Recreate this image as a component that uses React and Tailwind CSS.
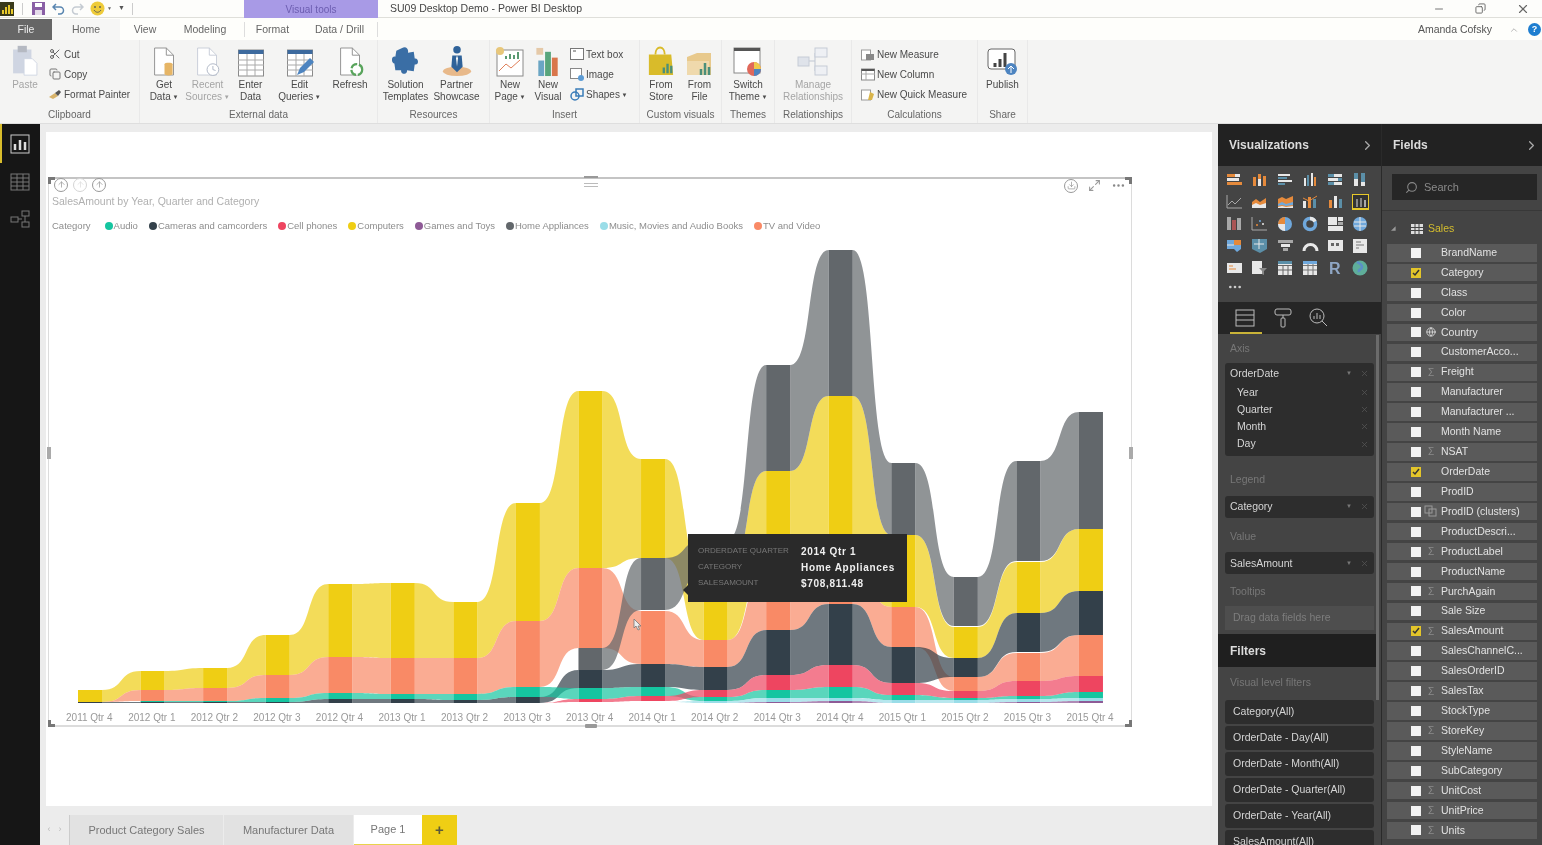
import { Scissors, Copy, ChevronRight, Search, X, ChevronUp, Minus, Globe, MoreHorizontal, Download, Maximize2, ArrowUp } from 'lucide-react';

const Y = '#EFCE14';
const OR = '#F98A66';
const GR = '#62676B';
const DK = '#33404A';
const TE = '#15C5A0';
const RE = '#EE4560';
const LB = '#9ADDE8';
const PU = '#8E5A96';

// top/bottom of every ribbon per quarter, null where the series has no bar
const series = [
  { color: Y, rows: [[690, 702], [671, 690], [668, 688], [635, 675], [584, 657], [583, 658], [602, 658], [503, 621], [391, 568], [459, 558], [572, 640], [471, 565], [396, 565], [535, 607], [627, 658], [562, 613], [529, 591]] },
  { color: OR, rows: [[702, 702], [690, 701], [688, 701], [675, 698], [657, 693], [658, 694], [658, 694], [621, 687], [568, 648], [611, 664], [640, 667], [572, 630], [565, 604], [607, 647], [677, 691], [653, 681], [635, 676]] },
  { color: DK, rows: [[702, 703], [702, 703], [702, 703], [702, 703], [699, 703], [699, 703], [700, 703], [697, 703], [670, 688], [664, 687], [667, 690], [630, 675], [604, 665], [647, 683], [658, 677], [613, 652], [591, 635]] },
  { color: TE, rows: [null, [701, 702], [701, 702], [698, 702], [693, 699], [694, 699], [694, 700], [687, 697], [688, 699], [687, 696], [697, 701], [690, 698], [687, 698], [695, 700], [698, 700], [696, 699], [692, 698]] },
  { color: RE, rows: [null, null, null, null, null, null, null, [703, 703], [699, 702], [696, 701], [690, 697], [675, 690], [665, 687], [683, 695], [691, 698], [681, 696], [676, 692]] },
  { color: LB, rows: [null, null, null, null, null, null, null, null, null, [702, 702], [701, 703], [698, 702], [698, 701], [700, 703], [700, 703], [699, 702], [698, 701]] },
  { color: PU, rows: [null, null, null, null, null, null, null, null, null, null, [703, 703], [702, 703], [701, 703], [703, 703], [703, 703], [702, 703], [701, 703]] },
  { color: GR, rows: [null, null, null, null, null, null, null, null, [648, 670], [558, 610], [540, 572], [365, 471], [250, 396], [463, 535], [577, 626], [461, 561], [412, 529]] },
];

const quarters = ['2011 Qtr 4', '2012 Qtr 1', '2012 Qtr 2', '2012 Qtr 3', '2012 Qtr 4', '2013 Qtr 1', '2013 Qtr 2', '2013 Qtr 3', '2013 Qtr 4', '2014 Qtr 1', '2014 Qtr 2', '2014 Qtr 3', '2014 Qtr 4', '2015 Qtr 1', '2015 Qtr 2', '2015 Qtr 3', '2015 Qtr 4'];

const legend = [
  ['Audio', 'bg-[#15C5A0]'],
  ['Cameras and camcorders', 'bg-[#33404A]'],
  ['Cell phones', 'bg-[#EE4560]'],
  ['Computers', 'bg-[#EFCE14]'],
  ['Games and Toys', 'bg-[#8E5A96]'],
  ['Home Appliances', 'bg-[#62676B]'],
  ['Music, Movies and Audio Books', 'bg-[#9ADDE8]'],
  ['TV and Video', 'bg-[#F98A66]'],
];

const fields = [
  ['BrandName'], ['Category', 'check'], ['Class'], ['Color'], ['Country', 'globe'], ['CustomerAcco...'],
  ['Freight', 'sum'], ['Manufacturer'], ['Manufacturer ...'], ['Month Name'], ['NSAT', 'sum'], ['OrderDate', 'check'],
  ['ProdID'], ['ProdID (clusters)', 'cluster'], ['ProductDescri...'], ['ProductLabel', 'sum'], ['ProductName'],
  ['PurchAgain', 'sum'], ['Sale Size'], ['SalesAmount', 'checksum'], ['SalesChannelC...'], ['SalesOrderID'],
  ['SalesTax', 'sum'], ['StockType'], ['StoreKey', 'sum'], ['StyleName'], ['SubCategory'], ['UnitCost', 'sum'],
  ['UnitPrice', 'sum'], ['Units', 'sum'],
];

const barX = (i) => 89 + i * 62.56;

function ribbon(a, b, i) {
  const x0 = barX(i) + 12;
  const x1 = barX(i + 1) - 12;
  const k = (x1 - x0) * 0.6;
  return `M${x0} ${a[0]}C${x0 + k} ${a[0]} ${x1 - k} ${b[0]} ${x1} ${b[0]}L${x1} ${b[1]}C${x1 - k} ${b[1]} ${x0 + k} ${a[1]} ${x0} ${a[1]}Z`;
}

function RibbonChart() {
  return (
    <svg width="1084" height="466" viewBox="48 240 1084 466" className="block">
      {series.map((s, n) => (
        <g key={n} fill={s.color} opacity="0.7">
          {s.rows.slice(0, -1).map((r, i) => (r && s.rows[i + 1] ? <path key={i} d={ribbon(r, s.rows[i + 1], i)} /> : null))}
        </g>
      ))}
      {series.map((s, n) => (
        <g key={n} fill={s.color}>
          {s.rows.map((r, i) => (r ? <rect key={i} x={barX(i) - 12} y={r[0]} width="24" height={r[1] - r[0]} /> : null))}
        </g>
      ))}
    </svg>
  );
}

function BigButton({ w, l1, l2, caret, dim, children }) {
  return (
    <div className={`flex flex-col items-center shrink-0 ${w}`}>
      <div className="h-[33px] flex items-end justify-center">{children}</div>
      <div className={`mt-[2px] text-[10px] leading-[12px] text-center whitespace-nowrap ${dim ? 'text-[#a5a5a5]' : 'text-[#4a4a4a]'}`}>
        <div>{l1}</div>
        {l2 && <div>{l2}{caret && <span className="text-[6px] align-middle"> ▼</span>}</div>}
      </div>
    </div>
  );
}

function SmallButton({ icon, children }) {
  return (
    <div className="h-[20px] flex items-center gap-[2px] text-[10px] text-[#4a4a4a] whitespace-nowrap">
      <span className="w-[15px] flex justify-center">{icon}</span>
      {children}
    </div>
  );
}

function Group({ w, label, children }) {
  return (
    <div className={`flex flex-col shrink-0 h-full border-r border-[#e9e9e9] ${w}`}>
      <div className="h-[64px] shrink-0 flex pt-[4px]">{children}</div>
      <div className="h-[19px] text-[10px] text-[#666] text-center leading-[22px]">{label}</div>
    </div>
  );
}

function Doc({ dim, children }) {
  const c = dim ? '#c5cbd6' : '#8a8a8a';
  return (
    <svg width="27" height="31" viewBox="0 0 30 34">
      <path d="M4 2h13l8 8v22H4z" fill="#fff" stroke={c} />
      <path d="M17 2v8h8" fill="none" stroke={c} />
      {children}
    </svg>
  );
}

function TableIcon({ w = 26, h = 28 }) {
  return (
    <svg width={w} height={h} viewBox="0 0 26 28">
      <rect x="0.5" y="1" width="25" height="26" fill="#fff" stroke="#8a8a8a" />
      <rect x="0.5" y="1" width="25" height="4" fill="#3d6a9e" />
      <path d="M0 11h26M0 16h26M0 21h26M9 5v22M17 5v22" stroke="#aaa" />
    </svg>
  );
}

function Ribbon() {
  return (
    <div className="h-[83px] bg-[#f4f4f3] flex shrink-0">
      <Group w="w-[140px]" label="Clipboard">
        <div className="w-[46px] flex">
          <BigButton w="w-[50px]" l1="Paste" dim>
            <svg width="28" height="33" viewBox="0 0 30 36">
              <rect x="2" y="6" width="20" height="26" fill="#cfd5e2" />
              <rect x="7" y="2" width="10" height="7" fill="#b5b9c2" />
              <path d="M14 16h9l5 5v13H14z" fill="#fff" stroke="#cfd5e2" />
            </svg>
          </BigButton>
        </div>
        <div className="flex flex-col pl-[1px]">
          <SmallButton icon={<Scissors size={12} color="#666" />}>Cut</SmallButton>
          <SmallButton icon={<Copy size={12} color="#777" />}>Copy</SmallButton>
          <SmallButton icon={
            <svg width="14" height="12" viewBox="0 0 14 12"><path d="M1 9l6-4 3 3-5 3z" fill="#d8b36a" /><path d="M7 5l4-3 2 2-3 4z" fill="#555" /></svg>
          }>Format Painter</SmallButton>
        </div>
      </Group>
      <Group w="w-[238px]" label="External data">
        <div className="flex pl-[2px]">
          <BigButton w="w-[44px]" l1="Get" l2="Data" caret>
            <Doc><path d="M15 20c0-2 9-2 9 0v11c0 2-9 2-9 0z" fill="#e6b566" /></Doc>
          </BigButton>
          <BigButton w="w-[43px]" l1="Recent" l2="Sources" caret dim>
            <Doc dim><circle cx="21" cy="26" r="6.5" fill="#fff" stroke="#aab2c2" /><path d="M21 22v4l3 1" stroke="#aab2c2" fill="none" /></Doc>
          </BigButton>
          <BigButton w="w-[43px]" l1="Enter" l2="Data"><TableIcon /></BigButton>
          <BigButton w="w-[55px]" l1="Edit" l2="Queries" caret>
            <div className="relative">
              <TableIcon />
              <svg width="20" height="20" viewBox="0 0 20 20" className="absolute right-[-2px] bottom-0"><path d="M2 18l3-7L15 1l4 4L9 15z" fill="#4d84c0" /></svg>
            </div>
          </BigButton>
          <BigButton w="w-[46px]" l1="Refresh">
            <Doc><circle cx="22" cy="26" r="6" fill="#fff" stroke="#59a45c" strokeWidth="2.5" strokeDasharray="8 2" /></Doc>
          </BigButton>
        </div>
      </Group>
      <Group w="w-[112px]" label="Resources">
        <div className="flex pl-[2px]">
          <BigButton w="w-[51px]" l1="Solution" l2="Templates">
            <svg width="28" height="31" viewBox="0 0 28 32"><path d="M10 2c4-2 7 1 6 5l6-1 1 7c4-1 5 7 0 6l-1 7-7-1c1 5-7 5-6 0l-6 0-1-7c-3 0-4-8 1-7l1-6z" fill="#3a6ea5" /></svg>
          </BigButton>
          <BigButton w="w-[51px]" l1="Partner" l2="Showcase">
            <svg width="30" height="32" viewBox="0 0 32 34">
              <ellipse cx="16" cy="28" rx="15" ry="5" fill="#e8b98a" />
              <circle cx="16" cy="5" r="4" fill="#2f6299" />
              <path d="M11 11h10l1 12-6 6-6-6z" fill="#2f6299" />
              <path d="M16 11l-1 3 1 9 1-9z" fill="#fff" />
            </svg>
          </BigButton>
        </div>
      </Group>
      <Group w="w-[150px]" label="Insert">
        <BigButton w="w-[40px]" l1="New" l2="Page" caret>
          <svg width="28" height="30" viewBox="0 0 28 30">
            <rect x="1" y="3" width="26" height="26" fill="#fff" stroke="#8a8a8a" />
            <path d="M3 24l7-7 5 4 9-8" stroke="#e0805a" fill="none" />
            <path d="M10 12v-3M14 12V7M18 12V8M22 12V5" stroke="#5a9a72" strokeWidth="2" />
            <circle cx="4" cy="4" r="4" fill="#e8c77a" />
          </svg>
        </BigButton>
        <BigButton w="w-[36px]" l1="New" l2="Visual">
          <svg width="26" height="31" viewBox="0 0 26 32">
            <rect x="1" y="2" width="7" height="7" fill="#e5c9a8" />
            <rect x="3" y="15" width="6" height="16" fill="#6aa5c4" />
            <rect x="10" y="6" width="6" height="25" fill="#58a57c" />
            <rect x="17" y="12" width="6" height="19" fill="#d9764b" />
          </svg>
        </BigButton>
        <div className="flex flex-col pl-[3px]">
          <SmallButton icon={<svg width="14" height="12" viewBox="0 0 14 12"><rect x="0.5" y="0.5" width="13" height="11" fill="#fff" stroke="#777" /><path d="M3 3h3" stroke="#555" /></svg>}>Text box</SmallButton>
          <SmallButton icon={<svg width="14" height="13" viewBox="0 0 14 13"><rect x="0.5" y="0.5" width="11" height="10" fill="#fff" stroke="#888" /><circle cx="11" cy="10" r="3" fill="#5b9bd5" /></svg>}>Image</SmallButton>
          <SmallButton icon={<svg width="14" height="13" viewBox="0 0 14 13"><circle cx="5" cy="8" r="4" fill="none" stroke="#3a7cb8" strokeWidth="1.5" /><rect x="6" y="1" width="7" height="7" fill="none" stroke="#3a7cb8" strokeWidth="1.5" /></svg>}><span>Shapes<span className="text-[6px] align-middle"> ▼</span></span></SmallButton>
        </div>
      </Group>
      <Group w="w-[82px]" label="Custom visuals">
        <BigButton w="w-[42px]" l1="From" l2="Store">
          <svg width="28" height="32" viewBox="0 0 30 34">
            <path d="M9 10c0-10 10-10 10 0" fill="none" stroke="#d9bb2a" strokeWidth="2" />
            <path d="M2 10h24l2 22H2z" fill="#d9bb2a" />
            <path d="M18 30v-6M22 30V20M26 30v-8" stroke="#4a8f7a" strokeWidth="2.5" />
          </svg>
        </BigButton>
        <BigButton w="w-[35px]" l1="From" l2="File">
          <svg width="30" height="30" viewBox="0 0 30 30">
            <path d="M2 10l10-4h14v22H2z" fill="#e8c98c" />
            <path d="M2 14h22v14H2z" fill="#efd9ac" />
            <path d="M16 28v-6M20 28V16M24 28V20" stroke="#4a8f7a" strokeWidth="2.5" />
          </svg>
        </BigButton>
      </Group>
      <Group w="w-[53px]" label="Themes">
        <BigButton w="w-[52px]" l1="Switch" l2="Theme" caret>
          <svg width="30" height="30" viewBox="0 0 30 30">
            <rect x="1" y="1" width="26" height="25" fill="#fff" stroke="#888" />
            <rect x="1" y="1" width="26" height="3" fill="#555" />
            <circle cx="21" cy="22" r="7" fill="#e0685a" />
            <path d="M21 22V15a7 7 0 0 1 7 7z" fill="#efc94c" />
            <path d="M21 22h7a7 7 0 0 1-7 7z" fill="#4d84c0" />
          </svg>
        </BigButton>
      </Group>
      <Group w="w-[77px]" label="Relationships">
        <BigButton w="w-[76px]" l1="Manage" l2="Relationships" dim>
          <svg width="32" height="30" viewBox="0 0 32 30">
            <path d="M12 14h6M18 6v18" stroke="#bfc6d2" fill="none" />
            <rect x="1" y="10" width="11" height="9" fill="#dfe3ea" stroke="#c5cbd6" />
            <rect x="18" y="1" width="12" height="9" fill="#eef0f4" stroke="#c5cbd6" />
            <rect x="18" y="19" width="12" height="9" fill="#eef0f4" stroke="#c5cbd6" />
          </svg>
        </BigButton>
      </Group>
      <Group w="w-[126px]" label="Calculations">
        <div className="flex flex-col pl-[8px]">
          <SmallButton icon={<svg width="14" height="13" viewBox="0 0 14 13"><rect x="0.5" y="2" width="9" height="10" fill="#fff" stroke="#999" /><rect x="5" y="6" width="8" height="6" fill="#888" /></svg>}>New Measure</SmallButton>
          <SmallButton icon={<svg width="14" height="13" viewBox="0 0 14 13"><rect x="0.5" y="1" width="13" height="11" fill="#fff" stroke="#888" /><path d="M5 1v11M0 6h14" stroke="#aaa" /><rect x="0.5" y="1" width="13" height="2" fill="#555" /></svg>}>New Column</SmallButton>
          <SmallButton icon={<svg width="14" height="13" viewBox="0 0 14 13"><rect x="0.5" y="2" width="9" height="10" fill="#fff" stroke="#999" /><path d="M7 12l2-8 4 2-2 6z" fill="#d9b44a" /></svg>}>New Quick Measure</SmallButton>
        </div>
      </Group>
      <Group w="w-[50px]" label="Share">
        <BigButton w="w-[49px]" l1="Publish">
          <svg width="32" height="30" viewBox="0 0 32 30">
            <rect x="1" y="2" width="27" height="20" rx="3" fill="#fff" stroke="#666" />
            <path d="M8 20v-4M13 20v-8M18 20V6" stroke="#444" strokeWidth="3" />
            <circle cx="24" cy="22" r="6" fill="#4d84c0" />
            <path d="M24 26v-7M21 22l3-3 3 3" stroke="#fff" fill="none" />
          </svg>
        </BigButton>
      </Group>
    </div>
  );
}

function VizIcon({ n }) {
  const o = '#E58A3C';
  const w = '#E8E8E8';
  const g = '#A8A8A8';
  const b = '#6FA8DC';
  const t = '#5B8FA8';
  const icons = [
    <><rect x="1" y="2" width="8" height="3" fill={o} /><rect x="9" y="2" width="5" height="3" fill={w} /><rect x="1" y="6" width="12" height="3" fill={w} /><rect x="1" y="10" width="15" height="3" fill={o} /></>,
    <><rect x="2" y="5" width="3" height="9" fill={o} /><rect x="7" y="7" width="3" height="7" fill={w} /><rect x="7" y="2" width="3" height="5" fill={o} /><rect x="12" y="4" width="3" height="10" fill={o} /></>,
    <><rect x="1" y="2" width="12" height="2" fill={w} /><rect x="1" y="5" width="9" height="2" fill={t} /><rect x="1" y="8" width="14" height="2" fill={w} /><rect x="1" y="11" width="7" height="2" fill={t} /></>,
    <><rect x="2" y="6" width="2" height="8" fill={w} /><rect x="5" y="3" width="2" height="11" fill={t} /><rect x="9" y="1" width="2" height="13" fill={w} /><rect x="12" y="5" width="2" height="9" fill={o} /></>,
    <><rect x="1" y="2" width="6" height="3" fill={t} /><rect x="7" y="2" width="8" height="3" fill={w} /><rect x="1" y="6" width="10" height="3" fill={w} /><rect x="11" y="6" width="4" height="3" fill={t} /><rect x="1" y="10" width="6" height="3" fill={t} /><rect x="7" y="10" width="8" height="3" fill={w} /></>,
    <><rect x="2" y="1" width="4" height="6" fill={t} /><rect x="2" y="7" width="4" height="7" fill={w} /><rect x="9" y="1" width="4" height="9" fill={t} /><rect x="9" y="10" width="4" height="4" fill={w} /></>,
    <path d="M1 14V1M1 14h15M2 11l4-4 3 3 6-6" stroke={g} fill="none" />,
    <><path d="M1 14V8l4-3 4 3 6-4v10z" fill={o} /><path d="M1 14v-3l4-2 4 2 6-2v5z" fill={w} /></>,
    <><path d="M1 14V5l4-2 4 2 7-3v12z" fill={o} /><path d="M1 10l4-2 4 2 7-2v3l-7 1-4-1-4 1z" fill={b} /><path d="M1 13l4-1 4 1 7-1v2H1z" fill={w} /></>,
    <><rect x="1" y="7" width="3" height="7" fill={w} /><rect x="6" y="3" width="3" height="11" fill={o} /><rect x="11" y="5" width="3" height="9" fill={t} /><path d="M1 4l6 3 8-5" stroke={o} fill="none" /></>,
    <><rect x="2" y="6" width="3" height="8" fill={o} /><rect x="7" y="2" width="3" height="12" fill={w} /><rect x="12" y="5" width="3" height="9" fill={t} /></>,
    <><rect x="0" y="0" width="17" height="15" fill="#333" stroke="#E8C92A" strokeWidth="2" /><rect x="4" y="5" width="2" height="8" fill="#888" /><rect x="8" y="4" width="2" height="9" fill="#888" /><rect x="12" y="6" width="2" height="7" fill="#aaa" /></>,
    <><rect x="1" y="1" width="4" height="13" fill={g} /><rect x="6" y="4" width="4" height="10" fill="#a55" /><rect x="11" y="2" width="4" height="12" fill={g} /></>,
    <><path d="M1 1v13h15" stroke={g} fill="none" /><circle cx="6" cy="9" r="1" fill={o} /><circle cx="9" cy="5" r="1" fill={b} /><circle cx="12" cy="8" r="1" fill={w} /></>,
    <><circle cx="8" cy="8" r="7" fill={b} /><path d="M8 8V1a7 7 0 0 0-7 7z" fill={o} /><path d="M8 8H1a7 7 0 0 0 7 7z" fill={w} /></>,
    <><circle cx="8" cy="8" r="5.5" fill="none" stroke={b} strokeWidth="3.5" /><path d="M8 2.5a5.5 5.5 0 0 1 5 3" fill="none" stroke={w} strokeWidth="3.5" /></>,
    <><rect x="1" y="1" width="9" height="8" fill={w} /><rect x="11" y="1" width="5" height="4" fill={w} /><rect x="11" y="6" width="5" height="3" fill={g} /><rect x="1" y="10" width="15" height="5" fill={w} /></>,
    <><circle cx="8" cy="8" r="7" fill={b} /><path d="M2 6h12M2 10h12M8 1v14" stroke={w} /></>,
    <><path d="M1 2h14v9l-4 3-3-3H1z" fill={b} /><path d="M8 2h7v5H8z" fill={o} /><path d="M1 7h7" stroke={w} /></>,
    <><path d="M1 1h15v10l-7 4-8-4z" fill={t} /><path d="M3 6h10M8 1v10" stroke={w} /></>,
    <><rect x="1" y="2" width="15" height="3" fill={g} /><rect x="4" y="6" width="9" height="3" fill={w} /><rect x="6" y="10" width="5" height="3" fill={g} /></>,
    <path d="M2 13a6.5 6.5 0 0 1 13 0" fill="none" stroke={w} strokeWidth="3" />,
    <><rect x="1" y="2" width="15" height="11" fill={w} /><path d="M4 5h3v3H4zM9 5h3v3H9z" fill="#666" /></>,
    <><rect x="1" y="1" width="14" height="14" fill={w} /><path d="M4 4h5M4 7h8M4 10h3" stroke="#777" /></>,
    <><rect x="1" y="3" width="15" height="10" fill={w} /><path d="M3 6h4M3 9h7" stroke={o} /></>,
    <><rect x="1" y="1" width="10" height="13" fill={w} /><path d="M8 8h8l-3 3v4l-2-1v-3z" fill="#888" /></>,
    <><rect x="1" y="1" width="14" height="14" fill={w} /><path d="M1 5.5h14M6 5.5V15M11 5.5V15M1 10h14" stroke="#666" /><rect x="1" y="1" width="14" height="3" fill={t} /></>,
    <><rect x="1" y="1" width="14" height="14" fill={w} /><path d="M1 5.5h14M6 1v14M11 1v14M1 10h14" stroke="#777" /><rect x="1" y="1" width="14" height="3" fill={b} /></>,
    <text x="2" y="14" fontSize="16" fontWeight="700" fontFamily="Liberation Sans" fill="#8FA6C4">R</text>,
    <><circle cx="8" cy="8" r="7.5" fill="#5FAE9A" /><path d="M5 2c3 2 5 2 5 5s-4 2-3 5" stroke="#5B8FC8" strokeWidth="2.5" fill="none" /></>,
  ];
  return <svg width="17" height="16" viewBox="0 0 17 16">{icons[n]}</svg>;
}

function Well({ name, children }) {
  return (
    <div className="mx-[7px] bg-[#2d2d2d] rounded-[3px] text-[10.5px] text-[#d5d5d5] pl-[5px] pr-[5px] py-[4px]">
      <div className="h-[14px] flex items-center">
        <span className="flex-1">{name}</span>
        <span className="text-[6px] text-[#777] mr-[8px]">▼</span>
        <X size={9} color="#555" />
      </div>
      {children}
    </div>
  );
}

function SubRow({ name }) {
  return (
    <div className="h-[17.3px] flex items-center pl-[7px]">
      <span className="flex-1">{name}</span>
      <X size={9} color="#555" />
    </div>
  );
}

function WellLabel({ children, className = '' }) {
  return <div className={`px-[12px] text-[10.5px] text-[#777] ${className}`}>{children}</div>;
}

function FilterCard({ children }) {
  return <div className="mx-[7px] h-[24px] shrink-0 bg-[#2d2d2d] rounded-[3px] text-[10.5px] text-[#d5d5d5] flex items-center pl-[8px] whitespace-nowrap">{children}</div>;
}

function VisualizationsPane() {
  return (
    <div className="w-[164px] shrink-0 bg-[#444] flex flex-col border-r border-[#2a2a2a] overflow-hidden relative">
      <div className="h-[42px] bg-[#222] shrink-0 flex items-center justify-between pl-[11px] pr-[6px] text-[12px] font-bold text-[#dcdcdc]">
        Visualizations
        <ChevronRight size={15} color="#aaa" />
      </div>
      <div className="grid grid-cols-[repeat(6,25.3px)] auto-rows-[22px] pl-[8px] pt-[3px] h-[110px] shrink-0">
        {Array.from({ length: 30 }).map((_, i) => (
          <div key={i} className="flex items-center justify-center w-[17px]"><VizIcon n={i} /></div>
        ))}
      </div>
      <div className="h-[26px] shrink-0 pl-[9px] pt-[3px] leading-[10px] text-[#ccc] text-[13px] font-bold flex items-start">
        <MoreHorizontal size={16} color="#ccc" />
      </div>
      <div className="h-[32px] bg-[#262626] shrink-0 flex items-center pl-[16px] gap-[15px] relative">
        <svg width="24" height="20" viewBox="0 0 24 20" fill="none" stroke="#bbb"><rect x="2" y="2" width="18" height="16" /><path d="M2 7h18M2 12h18" /></svg>
        <svg width="20" height="22" viewBox="0 0 20 22" fill="none" stroke="#bbb"><rect x="2" y="2" width="16" height="6" rx="2" /><path d="M10 8v3" /><rect x="8" y="11" width="4" height="9" rx="1" /></svg>
        <svg width="20" height="22" viewBox="0 0 20 22" fill="none" stroke="#bbb"><circle cx="9" cy="9" r="7" /><path d="M14 14l5 5M6 12V9M9 12V6M12 12V8" /></svg>
        <div className="absolute left-[12px] bottom-0 w-[32px] h-[2px] bg-[#c9b338]" />
      </div>
      <WellLabel className="mt-[7px] mb-[6px]">Axis</WellLabel>
      <Well name="OrderDate">
        <div className="mt-[3px] mb-[-1px]">
          <SubRow name="Year" />
          <SubRow name="Quarter" />
          <SubRow name="Month" />
          <SubRow name="Day" />
        </div>
      </Well>
      <WellLabel className="mt-[16px] mb-[8px]">Legend</WellLabel>
      <Well name="Category" />
      <WellLabel className="mt-[11px] mb-[8px]">Value</WellLabel>
      <Well name="SalesAmount" />
      <WellLabel className="mt-[10px] mb-[6px]">Tooltips</WellLabel>
      <div className="mx-[7px] h-[24px] shrink-0 bg-[#4e4e4e] text-[10.5px] text-[#7d7d7d] flex items-center pl-[8px]">Drag data fields here</div>
      <div className="h-[33px] bg-[#1f1f1f] shrink-0 mt-[4px] flex items-center pl-[12px] text-[12px] font-bold text-[#dcdcdc] w-[158px]">Filters</div>
      <WellLabel className="mt-[8px] mb-[9px]">Visual level filters</WellLabel>
      <div className="flex flex-col gap-[2px]">
        <FilterCard>Category(All)</FilterCard>
        <FilterCard>OrderDate - Day(All)</FilterCard>
        <FilterCard>OrderDate - Month(All)</FilterCard>
        <FilterCard>OrderDate - Quarter(All)</FilterCard>
        <FilterCard>OrderDate - Year(All)</FilterCard>
        <FilterCard>SalesAmount(All)</FilterCard>
      </div>
      <div className="absolute right-[2px] top-[211px] w-[3px] h-[365px] bg-[#6b6b6b]" />
    </div>
  );
}

function FieldRow({ name, kind }) {
  const checked = kind === 'check' || kind === 'checksum';
  return (
    <div className="h-[17.5px] shrink-0 bg-[#5a5a5a] flex items-center text-[10.5px] text-[#e2e2e2] whitespace-nowrap">
      <span className={`ml-[24px] w-[10px] h-[10px] shrink-0 flex items-center justify-center ${checked ? 'bg-[#e3c52a]' : 'bg-[#f2f2f2]'}`}>
        {checked && <svg width="8" height="8" viewBox="0 0 8 8"><path d="M1 4l2 2 4-5" stroke="#333" strokeWidth="1.5" fill="none" /></svg>}
      </span>
      <span className="w-[20px] flex justify-center text-[#8c8c8c]">
        {(kind === 'sum' || kind === 'checksum') && <span className="text-[10px]">Σ</span>}
        {kind === 'globe' && <Globe size={10} color="#ddd" />}
        {kind === 'cluster' && <svg width="14" height="13" viewBox="0 0 14 13" fill="none" stroke="#999"><rect x="1" y="1" width="7" height="7" /><rect x="5" y="4" width="7" height="7" /></svg>}
      </span>
      <span>{name}</span>
    </div>
  );
}

function FieldsPane() {
  return (
    <div className="flex-1 bg-[#444] flex flex-col overflow-hidden">
      <div className="h-[42px] bg-[#222] shrink-0 flex items-center justify-between pl-[11px] pr-[3px] text-[12px] font-bold text-[#dcdcdc]">
        Fields
        <ChevronRight size={15} color="#aaa" />
      </div>
      <div className="ml-[10px] mr-[5px] mt-[8px] h-[26px] bg-[#262626] shrink-0 flex items-center pl-[13px] gap-[6px] text-[11px] text-[#8a8a8a]">
        <Search size={13} color="#888" className="-scale-x-100" />
        Search
      </div>
      <div className="h-[11px] shrink-0 border-b border-[#383838]" />
      <div className="h-[33px] shrink-0 flex items-center pl-[9px] text-[10.5px] text-[#d4bd2e] pt-[2px]">
        <span className="text-[6px] text-[#999] w-[20px]">◢</span>
        <svg width="12" height="10" viewBox="0 0 12 10" className="mr-[5px]"><rect width="12" height="10" fill="#ddd" /><path d="M0 3.5h12M0 6.5h12M4 0v10M8 0v10" stroke="#444" /></svg>
        Sales
      </div>
      <div className="flex flex-col gap-[2.43px] mx-[5px]">
        {fields.map(([name, kind]) => <FieldRow key={name} name={name} kind={kind} />)}
      </div>
    </div>
  );
}

function Handle({ className }) {
  return <div className={`absolute w-[7px] h-[7px] border-[#777] ${className}`} />;
}

function Visual() {
  return (
    <div className="relative ml-[2px] mt-[45px] w-[1084px] h-[550px] border-t-2 border-b-2 border-x border-[#dcdcdc] border-t-[#c4c4c4]">
      <Handle className="left-[-1px] top-[-2px] border-l-[3px] border-t-[3px]" />
      <Handle className="right-[-1px] top-[-2px] border-r-[3px] border-t-[3px]" />
      <Handle className="left-[-1px] bottom-[-2px] border-l-[3px] border-b-[3px]" />
      <Handle className="right-[-1px] bottom-[-2px] border-r-[3px] border-b-[3px]" />
      <div className="absolute left-[-2px] top-[268px] w-[4px] h-[12px] bg-[#aaa]" />
      <div className="absolute right-[-2px] top-[268px] w-[4px] h-[12px] bg-[#aaa]" />
      <div className="absolute left-[535px] top-[-3px] w-[14px] flex flex-col gap-[2px]">
        <div className="h-[2px] bg-[#999]" />
        <div className="h-[1px] bg-[#bbb] mt-[3px]" />
        <div className="h-[1px] bg-[#bbb]" />
      </div>
      <div className="absolute left-[536px] bottom-[-3px] w-[12px] h-[4px] bg-[#999] rounded-[1px]" />

      <div className="flex items-center gap-[5px] pl-[5px] pt-[1px] h-[16px] mt-[-3px]">
        <span className="w-[14px] h-[14px] rounded-full border border-[#999] flex items-center justify-center"><ArrowUp size={9} color="#999" /></span>
        <span className="w-[14px] h-[14px] rounded-full border border-[#d5d5d5] flex items-center justify-center"><ArrowUp size={9} color="#ddd" /></span>
        <span className="w-[14px] h-[14px] rounded-full border border-[#999] flex items-center justify-center"><ArrowUp size={9} color="#999" /></span>
      </div>
      <div className="absolute right-[5px] top-[-1px] flex items-center gap-[10px]">
        <span className="w-[14px] h-[14px] rounded-full border border-[#999] flex items-center justify-center"><Download size={9} color="#999" /></span>
        <Maximize2 size={13} color="#999" />
        <MoreHorizontal size={15} color="#888" />
      </div>
      <div className="pl-[3px] mt-[2px] h-[14px] leading-[14px] text-[10.5px] text-[#b0b0b0]">SalesAmount by Year, Quarter and Category</div>
      <div className="flex items-center pl-[3px] mt-[11px] h-[14px] text-[9.5px] text-[#8d8d8d] whitespace-nowrap">
        <span className="mr-[14px]">Category</span>
        <div className="flex items-center gap-[11px]">
          {legend.map(([label, dot]) => (
            <span key={label} className="flex items-center gap-[1px]">
              <span className={`w-[8px] h-[8px] rounded-full ${dot}`} />
              {label}
            </span>
          ))}
        </div>
      </div>
      <div className="mt-[7px]"><RibbonChart /></div>
      <div className="flex pl-[9px] mt-[6px]">
        {quarters.map((q) => (
          <div key={q} className="w-[62.56px] shrink-0 text-center text-[10px] leading-[12px] text-[#999]">{q}</div>
        ))}
      </div>

      <div className="absolute left-[639px] top-[355px] w-[219px] h-[68px] bg-[#2a2a2a] flex flex-col justify-center gap-[3px] pl-[10px] pb-[2px]">
        <div className="absolute left-[-5px] top-[51px] border-y-[5px] border-y-transparent border-r-[5px] border-r-[#2a2a2a]" />
        {[['ORDERDATE QUARTER', '2014 Qtr 1'], ['CATEGORY', 'Home Appliances'], ['SALESAMOUNT', '$708,811.48']].map(([k, v]) => (
          <div key={k} className="flex items-center h-[13px]">
            <span className="w-[103px] text-[8px] text-[#777] whitespace-nowrap">{k}</span>
            <span className="text-[10px] font-bold tracking-[0.7px] text-[#efefef]">{v}</span>
          </div>
        ))}
      </div>
      <svg width="9" height="13" viewBox="0 0 9 13" className="absolute left-[584px] top-[439px]">
        <path d="M1 1v9l2-2 2 4 1.5-.6L5 8h3z" fill="#eee" stroke="#777" strokeWidth="0.8" />
      </svg>
    </div>
  );
}

function PageTabs() {
  return (
    <div className="h-[30px] shrink-0 flex text-[11px] text-[#777] mt-[9px]">
      <div className="w-[30px] flex items-center justify-center gap-[8px] text-[#bbb] text-[9px] border-r border-[#ccc] ml-0">
        <span>‹</span><span>›</span>
      </div>
      <div className="w-[153px] bg-[#e2e2e2] flex items-center justify-center">Product Category Sales</div>
      <div className="w-[129px] ml-[1px] bg-[#e2e2e2] flex items-center justify-center">Manufacturer Data</div>
      <div className="w-[68px] ml-[1px] bg-white border-b border-[#e8d34a] flex items-center justify-center">Page 1</div>
      <div className="w-[35px] bg-[#EFCE14] flex items-center justify-center text-[15px] font-bold text-[#5a5a3a]">+</div>
    </div>
  );
}

export default function App() {
  return (
    <div className="w-[1542px] h-[845px] overflow-hidden flex flex-col bg-white blur-[0.4px] [font-family:'Liberation_Sans',sans-serif]">
      {/* title bar */}
      <div className="h-[18px] shrink-0 flex items-center bg-[#fdfdfb] border-b border-[#dfdfda] relative">
        <svg width="14" height="14" viewBox="0 0 14 14" className="ml-0 mr-[8px] bg-[#3a3a1a]"><path d="M2 12V8h2v4zM5 12V5h2v7zM8 12V3h2v9zM11 12V7h2v5z" fill="#e8c92a" /></svg>
        <div className="w-px h-[12px] bg-[#ccc] mr-[8px]" />
        <svg width="15" height="15" viewBox="0 0 15 15" className="mr-[6px]"><rect x="1" y="1" width="13" height="13" fill="#8a5fa5" /><rect x="4" y="2" width="7" height="4" fill="#fff" /><rect x="4" y="9" width="7" height="5" fill="#e5dcea" /></svg>
        <svg width="13" height="12" viewBox="0 0 13 12" fill="none" stroke="#5a86b0" strokeWidth="1.5" className="mr-[6px]"><path d="M4 1L1 4l3 3M1 4h7a3.5 3.5 0 0 1 0 7H6" /></svg>
        <svg width="13" height="12" viewBox="0 0 13 12" fill="none" stroke="#c5cbd2" strokeWidth="1.5" className="mr-[6px]"><path d="M9 1l3 3-3 3M12 4H5a3.5 3.5 0 0 0 0 7h2" /></svg>
        <svg width="15" height="15" viewBox="0 0 15 15" className="mr-[2px]"><circle cx="7.5" cy="7.5" r="7" fill="#eecb3a" /><circle cx="5" cy="6" r="1" fill="#665" /><circle cx="10" cy="6" r="1" fill="#665" /><path d="M4 9c2 3 5 3 7 0" stroke="#665" fill="none" /></svg>
        <span className="text-[5px] text-[#666] mr-[6px]">▼</span>
        <span className="text-[7px] text-[#555] mr-[7px]">▼</span>
        <div className="w-px h-[12px] bg-[#ccc]" />
        <div className="absolute left-[244px] top-0 w-[134px] h-[18px] bg-[#a89ae6] text-[10px] text-[#6c5db0] flex items-center justify-center">Visual tools</div>
        <div className="absolute left-[390px] top-0 h-[18px] flex items-center text-[10.5px] text-[#444]">SU09 Desktop Demo - Power BI Desktop</div>
        <div className="ml-auto flex items-center gap-[30px] pr-[12px]">
          <Minus size={12} color="#777" />
          <Copy size={11} color="#666" className="-scale-x-100" />
          <X size={14} color="#666" />
        </div>
      </div>
      {/* tab strip */}
      <div className="h-[22px] shrink-0 flex items-center bg-[#fefefb] text-[10.5px] text-[#666] pt-[1px]">
        <div className="w-[52px] h-full bg-[#666] text-[#eee] flex items-center justify-center">File</div>
        <div className="w-[68px] h-full bg-[#f6f6f5] flex items-center justify-center">Home</div>
        <div className="w-[50px] text-center">View</div>
        <div className="w-[70px] text-center">Modeling</div>
        <div className="w-[60px] text-center ml-[4px] pr-[4px] border-l border-[#ddd]">Format</div>
        <div className="w-[74px] text-center pr-[2px] border-r border-[#ddd]">Data / Drill</div>
        <div className="ml-auto flex items-center">
          <span className="text-[#555] mr-[17px]">Amanda Cofsky</span>
          <ChevronUp size={10} color="#aaa" className="mr-[9px]" />
          <span className="w-[13px] h-[13px] rounded-full bg-[#1e7ed0] text-white text-[9px] font-bold flex items-center justify-center mr-[1px]">?</span>
        </div>
      </div>
      <Ribbon />
      {/* body */}
      <div className="flex-1 flex min-h-0 border-t border-[#dedede]">
        <div className="w-[40px] shrink-0 bg-[#161616] flex flex-col items-center relative">
          <div className="absolute left-0 top-0 w-[2px] h-[39px] bg-[#d9bd2c]" />
          <svg width="20" height="20" viewBox="0 0 20 20" className="mt-[10px]"><rect x="1" y="1" width="18" height="18" fill="none" stroke="#ccc" /><path d="M5 16v-6M10 16V6M15 16v-8" stroke="#ddd" strokeWidth="2.5" /></svg>
          <svg width="20" height="20" viewBox="0 0 20 20" className="mt-[18px]" fill="none" stroke="#777"><rect x="1" y="2" width="18" height="16" /><path d="M1 6h18M1 10h18M1 14h18M7 2v16M13 2v16" /></svg>
          <svg width="20" height="20" viewBox="0 0 20 20" className="mt-[17px]" fill="none" stroke="#777"><rect x="1" y="8" width="7" height="5" /><rect x="12" y="2" width="7" height="5" /><rect x="12" y="13" width="7" height="5" /><path d="M8 10h4M15 7v6" /></svg>
        </div>
        <div className="w-[1178px] shrink-0 bg-[#ececec] flex flex-col">
          <div className="mx-[6px] mt-[8px] h-[674px] bg-white shrink-0 overflow-visible">
            <Visual />
          </div>
          <PageTabs />
        </div>
        <VisualizationsPane />
        <FieldsPane />
      </div>
    </div>
  );
}
